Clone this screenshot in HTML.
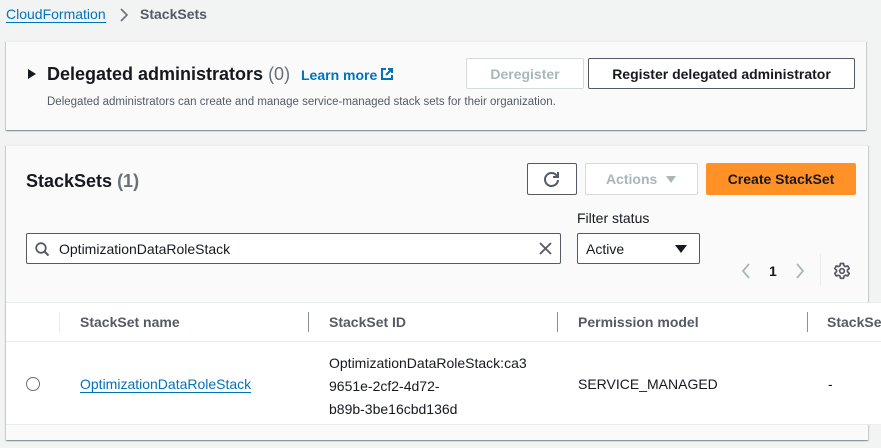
<!DOCTYPE html>
<html><head><meta charset="utf-8"><style>
*{box-sizing:border-box;margin:0;padding:0}
body{width:881px;height:448px;overflow:hidden;background:#f2f3f3;font-family:"Liberation Sans",Arial,sans-serif;color:#16191f;position:relative}
.a{position:absolute;white-space:nowrap}
.panel{position:absolute;background:#fafafa;box-shadow:0 1px 1px 0 rgba(0,28,36,.3),1px 1px 1px 0 rgba(0,28,36,.15),-1px 1px 1px 0 rgba(0,28,36,.15);border-top:1px solid #eaeded}
.btn{position:absolute;border:1px solid #545b64;border-radius:2px;background:#fff;font-weight:bold;font-size:14px;display:flex;align-items:center;justify-content:center;color:#16191f}
.link{color:#0073bb}
.th{font-size:14px;font-weight:bold;color:#545b64;top:314px}
.sep{position:absolute;width:1px;background:#879196;top:312px;height:20px}
</style></head><body>
<div class="a link" style="left:6px;top:6px;font-size:14px;border-bottom:1px solid #0073bb;line-height:16px">CloudFormation</div>
<svg class="a" style="left:118px;top:8px" width="12" height="14"><path d="M3 1l6 6-6 6" fill="none" stroke="#687078" stroke-width="1.6"/></svg>
<div class="a" style="left:140px;top:6px;font-size:14px;font-weight:bold;color:#545b64;line-height:16px">StackSets</div>

<div class="panel" style="left:6px;top:41px;width:860px;height:89px">
<svg class="a" style="left:21px;top:26px" width="10" height="12"><path d="M1 1l8 5-8 5z" fill="#16191f"/></svg>
<div class="a" style="left:41px;top:21px;font-size:18px;font-weight:bold;line-height:22px">Delegated administrators <span style="font-weight:normal;color:#687078">(0)</span></div>
<div class="a link" style="left:295px;top:25px;font-size:14px;font-weight:bold;line-height:16px">Learn more</div>
<svg class="a" style="left:374px;top:25px" width="14" height="14"><path d="M6 2H2v10h10V8M8 2h4v4M12 2L6 8" fill="none" stroke="#0073bb" stroke-width="2"/></svg>
<div class="a" style="left:41px;top:54px;font-size:11.5px;color:#545b64">Delegated administrators can create and manage service-managed stack sets for their organization.</div>
<div class="btn" style="left:460px;top:16px;width:118px;height:31px;border-color:#d5dbdb;color:#aab7b8">Deregister</div>
<div class="btn" style="left:582px;top:16px;width:267px;height:31px">Register delegated administrator</div>
</div>

<div class="panel" style="left:6px;top:145px;width:862px;height:295px">
<div class="a" style="left:20px;top:24px;font-size:18px;font-weight:bold;line-height:22px">StackSets <span style="font-weight:bold;color:#687078">(1)</span></div>
<div class="btn" style="left:521px;top:17px;width:50px;height:32px"><svg width="18" height="18"><path d="M14 6A6.5 6.5 0 1 0 15 10" fill="none" stroke="#545b64" stroke-width="2"/><path d="M15 2v5h-5" fill="none" stroke="#545b64" stroke-width="2"/></svg></div>
<div class="btn" style="left:579px;top:17px;width:113px;height:32px;border-color:#d5dbdb;color:#aab7b8">Actions&nbsp;&nbsp;<svg width="12" height="10"><path d="M1 2h10l-5 7z" fill="#aab7b8"/></svg></div>
<div class="btn" style="left:700px;top:17px;width:150px;height:32px;background:#ff9127;border-color:#ff9127">Create StackSet</div>
<div class="a" style="left:571px;top:64px;font-size:14px">Filter status</div>
<div class="a" style="left:20px;top:87px;width:535px;height:31px;background:#fff;border:1px solid #545b64;border-radius:2px"></div>
<svg class="a" style="left:29px;top:96px" width="15" height="15"><circle cx="6" cy="6" r="4.8" fill="none" stroke="#545b64" stroke-width="1.8"/><path d="M9.5 9.5l4 4" stroke="#545b64" stroke-width="2"/></svg>
<div class="a" style="left:53px;top:95px;font-size:14px">OptimizationDataRoleStack</div>
<svg class="a" style="left:532px;top:95px" width="15" height="15"><path d="M2 2l11 11M13 2L2 13" stroke="#545b64" stroke-width="1.8"/></svg>
<div class="a" style="left:571px;top:87px;width:123px;height:31px;background:#fff;border:1px solid #545b64;border-radius:2px"></div>
<div class="a" style="left:580px;top:95px;font-size:14px">Active</div>
<svg class="a" style="left:669px;top:98px" width="12" height="10"><path d="M0 1h12l-6 8z" fill="#16191f"/></svg>
<svg class="a" style="left:734px;top:116px" width="12" height="18"><path d="M9 2L3 9l6 7" fill="none" stroke="#aab7b8" stroke-width="1.8"/></svg>
<div class="a" style="left:763px;top:117px;font-size:14px;font-weight:bold">1</div>
<svg class="a" style="left:788px;top:116px" width="12" height="18"><path d="M3 2l6 7-6 7" fill="none" stroke="#aab7b8" stroke-width="1.8"/></svg>
<div class="a" style="left:814px;top:108px;width:1px;height:32px;background:#eaeded"></div>
<svg class="a" style="left:827px;top:116px" width="18" height="18" viewBox="0 0 18 18"><path d="M7.5 1.5h3l.5 2.2 1.6.9 2.1-.7 1.5 2.6-1.7 1.5v1.8l1.7 1.5-1.5 2.6-2.1-.7-1.6.9-.5 2.2h-3l-.5-2.2-1.6-.9-2.1.7-1.5-2.6 1.7-1.5V8l-1.7-1.5 1.5-2.6 2.1.7 1.6-.9z" fill="none" stroke="#545b64" stroke-width="1.7" stroke-linejoin="round"/><circle cx="9" cy="9" r="2.3" fill="none" stroke="#545b64" stroke-width="1.7"/></svg>
</div>

<div class="a" style="left:6px;top:302px;width:875px;height:123px;background:#fff;border-top:1px solid #eaeded;border-bottom:1px solid #eaeded"></div>
<div class="a" style="left:6px;top:341px;width:875px;height:1px;background:#eaeded"></div>
<div class="a" style="left:59px;top:312px;width:1px;height:20px;background:#eaeded"></div>
<div class="a th" style="left:80px">StackSet name</div>
<div class="sep" style="left:308px"></div>
<div class="a th" style="left:329px">StackSet ID</div>
<div class="sep" style="left:557px"></div>
<div class="a th" style="left:578px">Permission model</div>
<div class="sep" style="left:807px"></div>
<div class="a th" style="left:827px">StackSe</div>
<div class="a" style="left:26px;top:377px;width:14px;height:14px;border:1.5px solid #687078;border-radius:50%"></div>
<div class="a link" style="left:80px;top:376px;font-size:14px;border-bottom:1px solid #0073bb;line-height:16px">OptimizationDataRoleStack</div>
<div class="a" style="left:329px;top:352px;font-size:14px;line-height:23px">OptimizationDataRoleStack:ca3<br>9651e-2cf2-4d72-<br>b89b-3be16cbd136d</div>
<div class="a" style="left:578px;top:376px;font-size:14px">SERVICE_MANAGED</div>
<div class="a" style="left:828px;top:376px;font-size:14px">-</div>
</body></html>
